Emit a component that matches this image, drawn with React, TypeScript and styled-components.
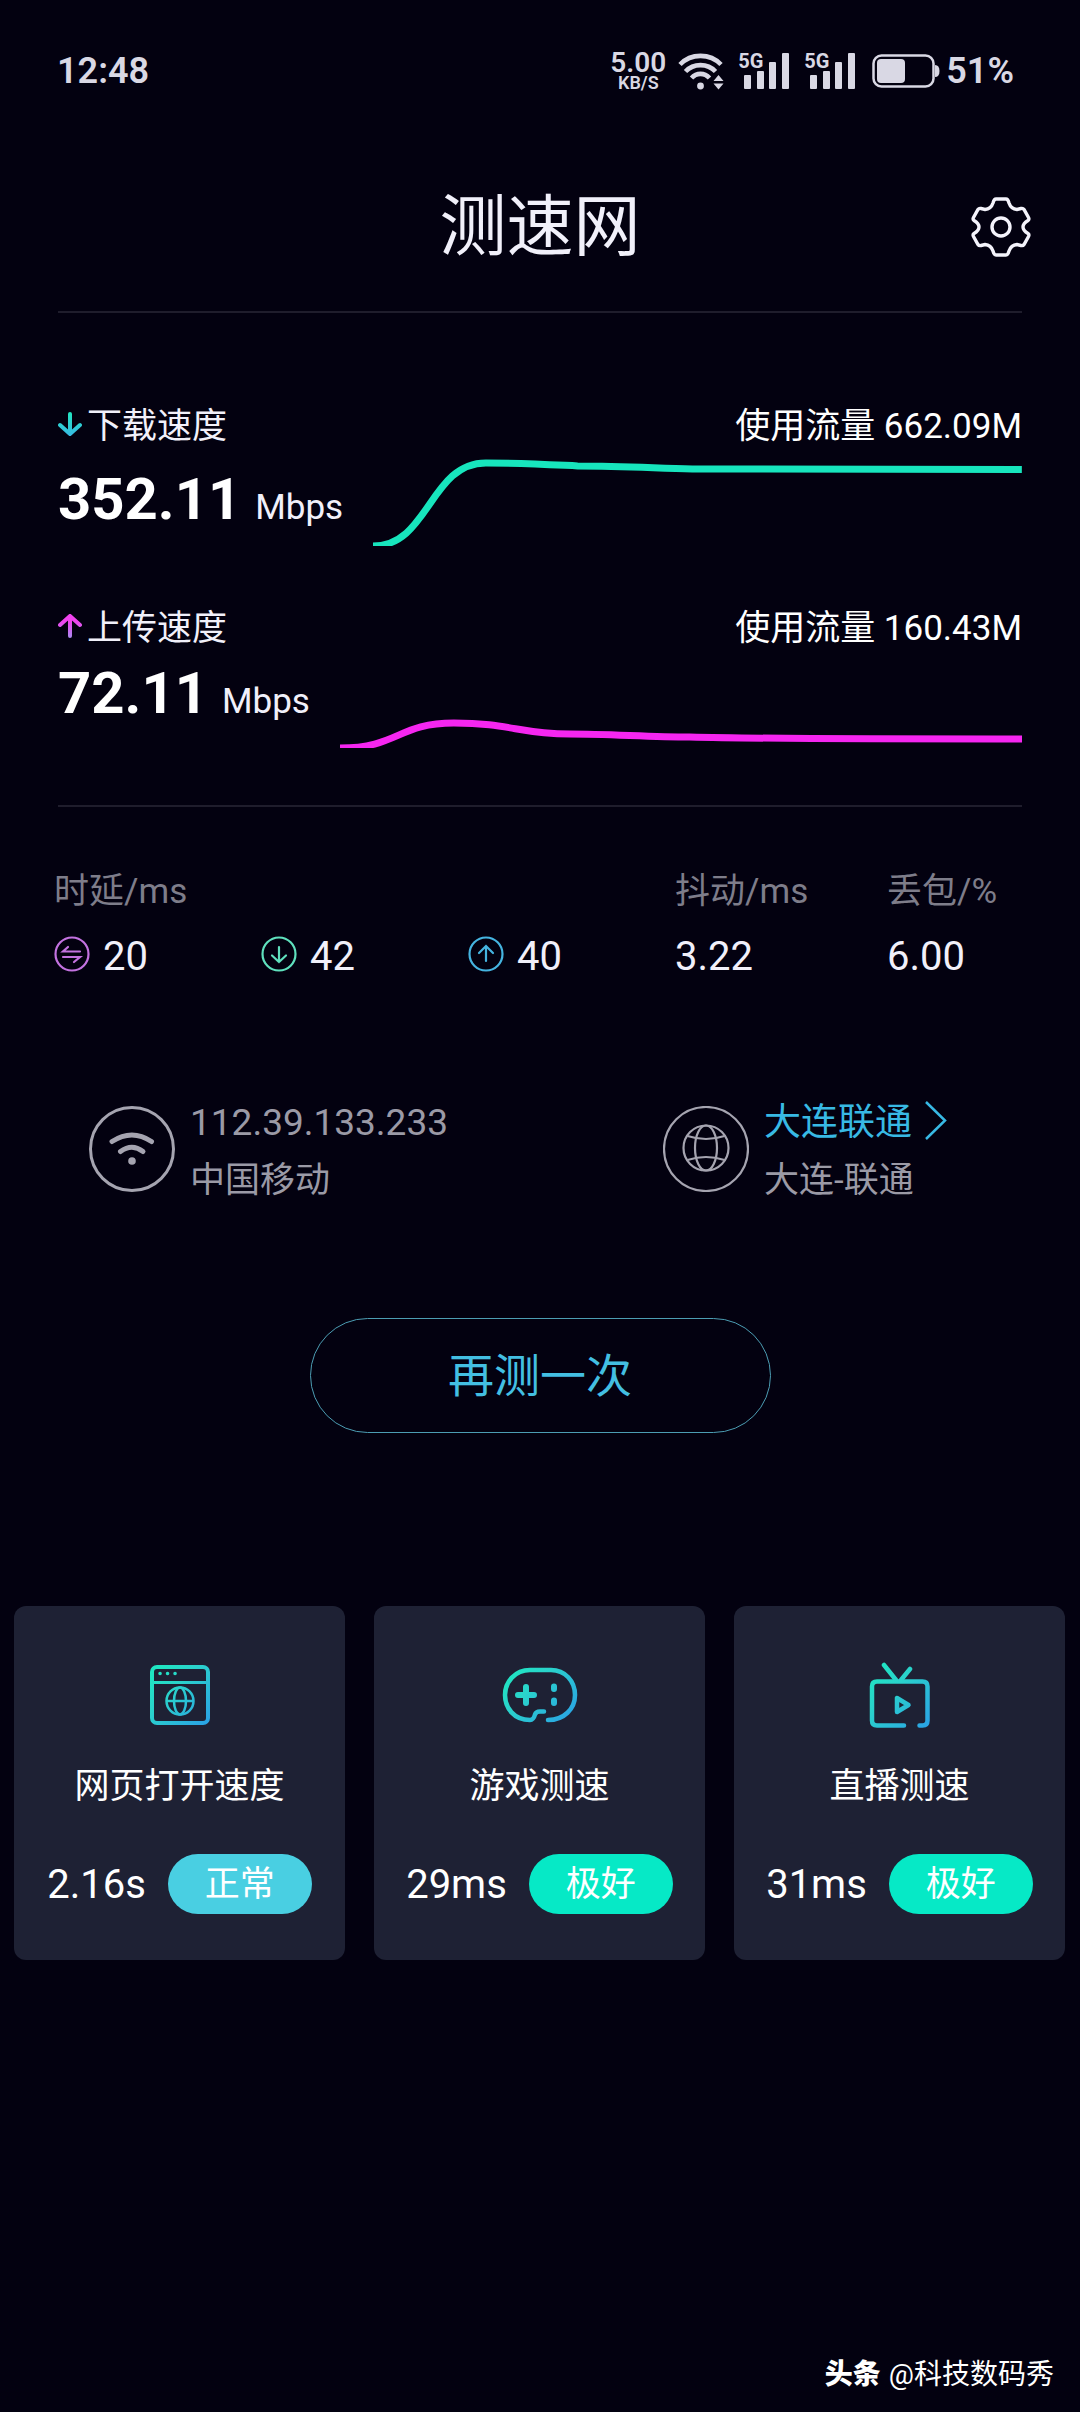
import React from "react";
import styled, { createGlobalStyle } from "styled-components";

const GlobalStyle = createGlobalStyle`
  * { box-sizing: border-box; }
  html, body { margin: 0; background: #030110; }
  body {
    color: #f1f0fa;
    font-family: Roboto, "Noto Sans CJK SC", sans-serif;
    font-size: 35px;
    line-height: 41px;
  }
  h1, h2, p, dl, dd, dt { margin: 0; font-weight: 400; }
  button { font-family: inherit; color: inherit; background: none; border: 0; padding: 0; cursor: pointer; }
  svg { display: block; flex: none; }
`;

const Screen = styled.div`
  min-height: 100vh;
  display: flex;
  flex-direction: column;
`;

/* ---------- status bar ---------- */

const StatusBar = styled.div`
  display: flex;
  justify-content: space-between;
  align-items: center;
  padding: 50px 66px 0 57px;
  color: #d9d8e4;
`;

const StatusText = styled.span`
  font-size: 36px;
  font-weight: 600;
  line-height: 42px;
`;

const StatusIcons = styled.div`
  display: flex;
  align-items: center;
`;

const NetRate = styled.div`
  display: flex;
  flex-direction: column;
  align-items: center;
  font-weight: 600;
  margin-right: 12px;
`;

const RateValue = styled.span`
  font-size: 28px;
  line-height: 24px;
`;

const RateUnit = styled.span`
  font-size: 18px;
  line-height: 16px;
`;

const SignalBox = styled.div`
  position: relative;
  margin-left: 14px;
`;

const SignalTag = styled.span`
  position: absolute;
  left: 0;
  top: -2px;
  font-size: 20px;
  font-weight: 700;
  line-height: 20px;
`;

const BatteryBox = styled.div`
  margin: 0 6px 0 16px;
`;

/* ---------- header ---------- */

const Header = styled.header`
  display: grid;
  grid-template-columns: 1fr auto 1fr;
  align-items: center;
  padding: 0 49px 48px;
  margin-top: 99px;
`;

const Logo = styled.h1`
  grid-column: 2;
  font-size: 67px;
  line-height: 72px;
`;

const SettingsButton = styled.button`
  justify-self: end;
`;

const Divider = styled.hr`
  width: auto;
  height: 2px;
  margin: 0 58px;
  border: 0;
  background: #1f1d2c;
`;

/* ---------- speeds ---------- */

const Speeds = styled.main`
  display: flex;
  flex-direction: column;
  gap: 62px;
  padding: 93px 58px 57px;
`;

const SpeedBlock = styled.section`
  display: flex;
  flex-direction: column;
  gap: 2px;
`;

const SpeedHead = styled.div`
  display: flex;
  justify-content: space-between;
`;

const SpeedLabel = styled.h2`
  display: flex;
  align-items: center;
  gap: 5px;
  font-size: 35px;

  svg { margin-bottom: 6px; }
`;

const Usage = styled.span`
  color: #ffffff;
`;

const SpeedRow = styled.div<{ $align: string }>`
  display: flex;
  align-items: ${(p) => p.$align};
  gap: 30px;
`;

const Reading = styled.p`
  display: flex;
  align-items: baseline;
  gap: 14px;
  padding-top: 4px;
  line-height: 76px;
`;

const Figure = styled.strong`
  font-size: 58px;
  font-weight: 700;
  color: #ffffff;
`;

const Chart = styled.svg`
  flex: 1;
  min-width: 0;
  height: 97px;
`;

/* ---------- latency ---------- */

const Metrics = styled.dl`
  display: grid;
  grid-template-columns: 207fr 207fr 207fr 212fr 139fr;
  row-gap: 21px;
  padding: 64px 54px 0;
`;

const MetricName = styled.dt<{ $span?: number }>`
  grid-column: span ${(p) => p.$span ?? 1};
  color: #7e7d8a;
  white-space: nowrap;
`;

const MetricValue = styled.dd`
  display: flex;
  align-items: center;
  gap: 13px;
  font-size: 40px;
  line-height: 47px;

  svg { margin-bottom: 6px; }
`;

/* ---------- network ---------- */

const Network = styled.section`
  display: grid;
  grid-template-columns: 574fr 328fr;
  padding: 0 89px;
  margin-top: 119px;
  color: #9b9aa6;
`;

const Peer = styled.div`
  display: flex;
  align-items: flex-start;
  gap: 15px;

  > svg { margin-top: 7px; }
`;

const PeerText = styled.div`
  display: flex;
  flex-direction: column;
  gap: 10px;
  line-height: 48px;
  white-space: nowrap;
`;

const Address = styled.span`
  font-size: 37px;
`;

const ServerButton = styled.button`
  display: flex;
  align-items: center;
  gap: 13px;
  font-size: 37px;
  line-height: 48px;
  && { color: #38b9e4; }

  svg { margin-bottom: 4px; }
`;

const RetestButton = styled.button`
  align-self: center;
  width: 461px;
  height: 115px;
  margin-top: 113px;
  && { border: 1px solid #4c9db3; color: #43bfe2; }
  border-radius: 58px;
  font-size: 46px;
  line-height: 54px;
`;

/* ---------- cards ---------- */

const Cards = styled.section`
  display: grid;
  grid-template-columns: repeat(3, 1fr);
  gap: 29px;
  padding: 0 15px 0 14px;
  margin-top: 173px;
`;

const Card = styled.article`
  display: flex;
  flex-direction: column;
  align-items: center;
  padding: 56px 16px 46px;
  border-radius: 12px;
  background: #1e2134;
  color: #ffffff;
`;

const CardIcon = styled.div`
  display: flex;
  align-items: center;
  height: 66px;
`;

const CardTitle = styled.h2`
  font-size: 35px;
  margin: 38px 0 47px;
`;

const CardResult = styled.div`
  display: flex;
  align-items: center;
  gap: 22px;
  font-size: 40px;
`;

const Pill = styled.span<{ $color: string }>`
  width: 144px;
  padding: 10px 0 9px;
  border-radius: 30px;
  background: ${(p) => p.$color};
  font-size: 35px;
  text-align: center;
`;

const Watermark = styled.footer`
  display: flex;
  justify-content: flex-end;
  align-items: center;
  gap: 8px;
  margin-top: auto;
  padding: 0 26px 17px 0;
  font-size: 28px;
  color: #ffffff;
`;

const WatermarkBrand = styled.strong`
  font-weight: 900;
`;

/* ---------- drawings ---------- */

const StatusWifi = () => (
  <svg width="46" height="38" viewBox="0 0 46 38" fill="none" stroke="currentColor" strokeWidth="4.6">
    <path d="M2 12.5C13 1 32 1 43 12.5" />
    <path d="M7.5 19.5C15.5 11 29.5 11 37.5 19.5" />
    <path d="M13.5 26C18.5 20.5 26.5 20.5 31.5 26" />
    <circle cx="22.5" cy="34" r="3.4" fill="currentColor" stroke="none" />
    <path d="M35.5 29l5-6 5 6zM35.5 31.5l5 6 5-6z" fill="currentColor" stroke="none" />
  </svg>
);

const Signal = () => (
  <SignalBox>
    <SignalTag>5G</SignalTag>
    <svg width="52" height="36" viewBox="0 0 52 36" fill="currentColor">
      <rect x="6" y="22" width="7" height="14" rx="1" />
      <rect x="19" y="18" width="7" height="18" rx="1" />
      <rect x="31" y="9" width="7" height="27" rx="1" />
      <rect x="44" y="0" width="7" height="36" rx="1" />
    </svg>
  </SignalBox>
);

const Battery = () => (
  <svg width="68" height="34" viewBox="0 0 68 34" fill="none">
    <rect x="1.5" y="1.5" width="60" height="31" rx="8" stroke="currentColor" strokeWidth="2.5" />
    <rect x="5" y="5" width="28" height="24" rx="4" fill="currentColor" />
    <path d="M63 11c3 0 4.5 2 4.5 6s-1.5 6-4.5 6z" fill="currentColor" />
  </svg>
);

const Gear = () => (
  <svg width="60" height="60" viewBox="0 0 60 60" fill="none" stroke="#f4f3fb" strokeWidth="3.4">
    <path d="M25 2H35Q37 2 38 6Q40 12 46 12.5L50 11.5Q52 11 53 12.5L57.5 20.5Q58.5 22.5 57 23.5Q52 26.5 52 30T57 36.5Q58.5 37.5 57.5 39.5L53 47.5Q52 49 50 48.5L46 47.5Q40 48 38 54Q37 58 35 58H25Q23 58 22 54Q20 48 14 47.5L10 48.5Q8 49 7 47.5L2.5 39.5Q1.5 37.5 3 36.5Q8 33.5 8 30T3 23.5Q1.5 22.5 2.5 20.5L7 12.5Q8 11 10 11.5L14 12.5Q20 12 22 6Q23 2 25 2Z" />
    <circle cx="30" cy="30" r="9" />
  </svg>
);

const DownArrow = () => (
  <svg width="24" height="24" viewBox="0 0 24 24" fill="none" stroke="url(#arrowDown)" strokeWidth="4" strokeLinecap="round">
    <defs>
      <linearGradient id="arrowDown" gradientUnits="userSpaceOnUse" x1="0" y1="0" x2="0" y2="24">
        <stop offset="0" stopColor="#22e6c0" />
        <stop offset="1" stopColor="#38b9e4" />
      </linearGradient>
    </defs>
    <path d="M12 2V21M2 13L12 22L22 13" />
  </svg>
);

const UpArrow = () => (
  <svg width="24" height="24" viewBox="0 0 24 24" fill="none" stroke="url(#arrowUp)" strokeWidth="4" strokeLinecap="round">
    <defs>
      <linearGradient id="arrowUp" gradientUnits="userSpaceOnUse" x1="0" y1="0" x2="0" y2="24">
        <stop offset="0.3" stopColor="#f043ee" />
        <stop offset="1" stopColor="#a98bf0" />
      </linearGradient>
    </defs>
    <path d="M12 22V3M2 11L12 2L22 11" />
  </svg>
);

const RoundIcon = ({ color, d }: { color: string; d: string }) => (
  <svg width="36" height="36" viewBox="0 0 36 36" fill="none" stroke={color} strokeWidth="2.2" strokeLinecap="round">
    <circle cx="18" cy="18" r="16.5" />
    <path d={d} />
  </svg>
);

const WifiBadge = () => (
  <svg width="86" height="86" viewBox="0 0 86 86" fill="none" stroke="#a5a4b0" strokeLinecap="round">
    <circle cx="43" cy="43" r="41.5" strokeWidth="3" />
    <path d="M23 35.5Q43 22.5 62.5 35.5" strokeWidth="5" />
    <path d="M31.5 45.5Q43 37 54 45.5" strokeWidth="5" />
    <circle cx="43" cy="55" r="3.8" fill="#a5a4b0" stroke="none" />
  </svg>
);

const GlobeBadge = () => (
  <svg width="86" height="86" viewBox="0 0 86 86" fill="none" stroke="#a5a4b0" strokeWidth="2.2">
    <circle cx="43" cy="43" r="42" />
    <circle cx="43" cy="42" r="22.5" />
    <ellipse cx="43" cy="42" rx="11" ry="22.5" />
    <path d="M24.5 30Q43 36 61.5 30M24.5 54Q43 48 61.5 54" />
  </svg>
);

const Chevron = () => (
  <svg width="22" height="40" viewBox="0 0 22 40" fill="none" stroke="currentColor" strokeWidth="2.5">
    <path d="M1 1L20 19.5L1 38" />
  </svg>
);

const IconGradient = ({ id, size }: { id: string; size: number }) => (
  <defs>
    <linearGradient id={id} gradientUnits="userSpaceOnUse" x1="6" y1="6" x2={size} y2={size}>
      <stop offset="0" stopColor="#1fe5c2" />
      <stop offset="0.35" stopColor="#2ad3cb" />
      <stop offset="1" stopColor="#2aa5e4" />
    </linearGradient>
  </defs>
);

const BrowserIcon = () => (
  <svg width="60" height="60" viewBox="0 0 60 60" fill="none" stroke="url(#gBrowser)" strokeWidth="4">
    <IconGradient id="gBrowser" size={56} />
    <rect x="2" y="2" width="56" height="56" rx="5" />
    <path d="M2 17.5H58" strokeWidth="3" />
    <path d="M10 8.5h.1M17.5 8.5h.1M25 8.5h.1" strokeLinecap="round" strokeWidth="3.5" />
    <circle cx="30" cy="36" r="13.5" strokeWidth="2.5" />
    <ellipse cx="30" cy="36" rx="6" ry="13.5" strokeWidth="2.5" />
    <path d="M16.5 36H43.5" strokeWidth="2.5" />
  </svg>
);

const GameIcon = () => (
  <svg width="76" height="56" viewBox="0 0 76 56" fill="none" stroke="url(#gGame)" strokeWidth="4.5" strokeLinecap="round" strokeLinejoin="round">
    <IconGradient id="gGame" size={60} />
    <path d="M42 44.5H38Q34 44.5 33 47.5Q31.5 53 28 53C12 53 3 41 3 28S13 3 28 3H49C63 3 73 14 73 28S62 53 46 53" />
    <path d="M24 20V36M16 28H32" strokeWidth="6" />
    <path d="M52 19.5V22M52 33.5V36" strokeWidth="6" />
  </svg>
);

const TvIcon = () => (
  <svg width="62" height="66" viewBox="0 0 62 66" fill="none" stroke="url(#gTv)" strokeWidth="4.5" strokeLinecap="round" strokeLinejoin="round">
    <IconGradient id="gTv" size={60} />
    <path d="M15 3L27 18M41 7L32 18" />
    <path d="M35 63.5H8Q3 63.5 3 58.5V24.5Q3 19.5 8 19.5H53.5Q58.5 19.5 58.5 24.5V58.5Q58.5 63.5 53.5 63.5H50.5" />
    <path d="M28 36V50L39.5 43Z" />
  </svg>
);

const DownloadChart = () => (
  <Chart viewBox="0 -8 650 97" preserveAspectRatio="none" role="img" aria-label="下载速度曲线">
    <path
      d="M0 89C56 89 57 6 113 6C150 6 165 7 205 9C250 9 280 11 320 12C430 12.5 540 12.5 650 12.5"
      fill="none" stroke="#17e5bd" strokeWidth="7" vectorEffect="non-scaling-stroke"
    />
  </Chart>
);

const UploadChart = () => (
  <Chart viewBox="0 -8 683 97" preserveAspectRatio="none" role="img" aria-label="上传速度曲线">
    <path
      d="M0 89C58 89 58 64 114 64C170 64 180 75 230 75C270 75 310 78 350 78C430 80 560 80 683 80"
      fill="none" stroke="#f526f0" strokeWidth="7" vectorEffect="non-scaling-stroke"
    />
  </Chart>
);

/* ---------- page ---------- */

const cards = [
  { title: "网页打开速度", value: "2.16s", grade: "正常", color: "#49cfe2", icon: <BrowserIcon /> },
  { title: "游戏测速", value: "29ms", grade: "极好", color: "#06e9c6", icon: <GameIcon /> },
  { title: "直播测速", value: "31ms", grade: "极好", color: "#06e9c6", icon: <TvIcon /> },
];

export default function App() {
  return (
    <Screen>
      <GlobalStyle />
      <StatusBar>
        <StatusText>12:48</StatusText>
        <StatusIcons>
          <NetRate>
            <RateValue>5.00</RateValue>
            <RateUnit>KB/S</RateUnit>
          </NetRate>
          <StatusWifi />
          <Signal />
          <Signal />
          <BatteryBox>
            <Battery />
          </BatteryBox>
          <StatusText>51%</StatusText>
        </StatusIcons>
      </StatusBar>

      <Header>
        <Logo>测速网</Logo>
        <SettingsButton aria-label="设置">
          <Gear />
        </SettingsButton>
      </Header>
      <Divider />

      <Speeds>
        <SpeedBlock>
          <SpeedHead>
            <SpeedLabel><DownArrow />下载速度</SpeedLabel>
            <Usage>使用流量 662.09M</Usage>
          </SpeedHead>
          <SpeedRow $align="flex-end">
            <Reading><Figure>352.11</Figure>Mbps</Reading>
            <DownloadChart />
          </SpeedRow>
        </SpeedBlock>
        <SpeedBlock>
          <SpeedHead>
            <SpeedLabel><UpArrow />上传速度</SpeedLabel>
            <Usage>使用流量 160.43M</Usage>
          </SpeedHead>
          <SpeedRow $align="flex-start">
            <Reading><Figure>72.11</Figure>Mbps</Reading>
            <UploadChart />
          </SpeedRow>
        </SpeedBlock>
      </Speeds>
      <Divider />

      <Metrics>
        <MetricName $span={3}>时延/ms</MetricName>
        <MetricName>抖动/ms</MetricName>
        <MetricName>丢包/%</MetricName>
        <MetricValue>
          <RoundIcon color="#c372e0" d="M14 11L9 15.5H26M9 21H26L20 26" />20
        </MetricValue>
        <MetricValue>
          <RoundIcon color="#5fe0bd" d="M18 11V26M11 19.5L18 26L25 19.5" />42
        </MetricValue>
        <MetricValue>
          <RoundIcon color="#45b4e0" d="M18 25V10M11 17L18 10L25 17" />40
        </MetricValue>
        <MetricValue>3.22</MetricValue>
        <MetricValue>6.00</MetricValue>
      </Metrics>

      <Network>
        <Peer>
          <WifiBadge />
          <PeerText>
            <Address>112.39.133.233</Address>
            <span>中国移动</span>
          </PeerText>
        </Peer>
        <Peer>
          <GlobeBadge />
          <PeerText>
            <ServerButton>大连联通<Chevron /></ServerButton>
            <span>大连-联通</span>
          </PeerText>
        </Peer>
      </Network>

      <RetestButton>再测一次</RetestButton>

      <Cards>
        {cards.map((c) => (
          <Card key={c.title}>
            <CardIcon>{c.icon}</CardIcon>
            <CardTitle>{c.title}</CardTitle>
            <CardResult>
              <span>{c.value}</span>
              <Pill $color={c.color}>{c.grade}</Pill>
            </CardResult>
          </Card>
        ))}
      </Cards>

      <Watermark>
        <WatermarkBrand>头条</WatermarkBrand>
        <span>@科技数码秀</span>
      </Watermark>
    </Screen>
  );
}
